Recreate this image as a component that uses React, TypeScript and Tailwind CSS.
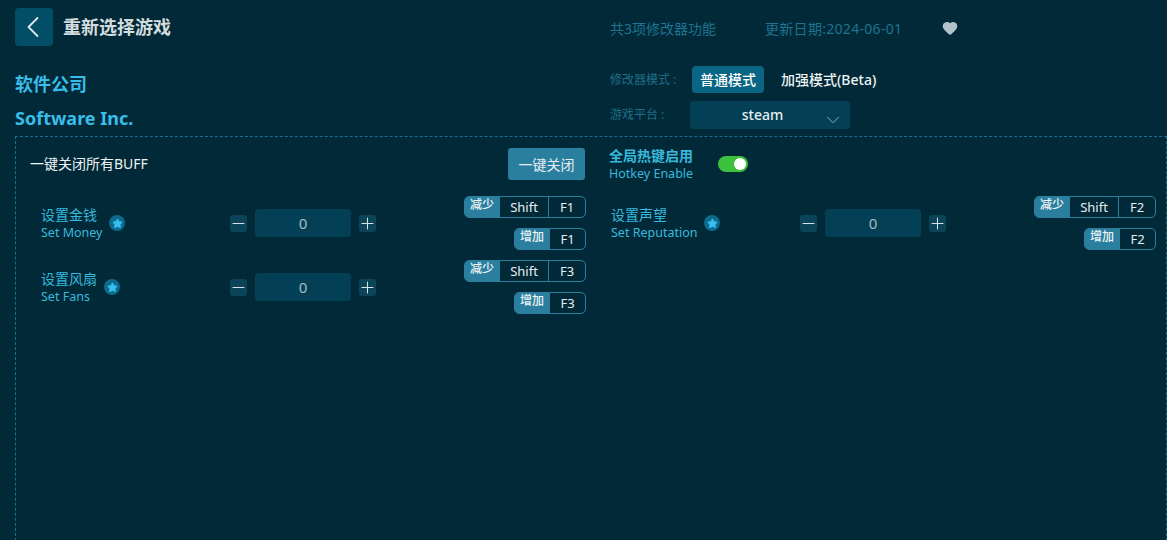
import { Star, ChevronLeft, ChevronDown, Heart, Minus, Plus } from 'lucide-react'

const font = { cjk: 'font-["Noto_Sans","Noto_Sans_CJK_SC",sans-serif]' }

interface Feature {
  name: string
  en: string
  fn: string
}

function KeyRow({ label, keys }: { label: string; keys: string[] }) {
  return (
    <div className="flex h-[22px] rounded-[5px] border border-[#2a7f9f] overflow-hidden text-[13px] leading-none text-[#e6eef1]">
      <div className="w-[36px] -ml-px bg-[#2a7f9f] flex justify-center pt-[2px] text-[12px] font-medium text-[#eef5f7]">{label}</div>
      {keys.map((k, i) => (
        <div
          key={k}
          className={`flex items-center justify-center ${k === 'Shift' ? 'w-[49px]' : keys.length > 1 ? 'w-[36px]' : 'w-[35px]'} ${i < keys.length - 1 ? 'border-r border-[#2a7f9f]' : ''}`}
        >
          {k}
        </div>
      ))}
    </div>
  )
}

function FeatureRow({ name, en, fn }: Feature) {
  return (
    <div className="w-[570px] h-[64px] pl-[25px] flex items-center">
      <div className="w-[189px] flex items-center">
        <div className="text-[#38b9dd]">
          <div className="text-[14px] leading-[18px]">{name}</div>
          <div className="text-[12.5px] leading-[17px]">{en}</div>
        </div>
        <div className="w-4 h-4 ml-[7px] rounded-full bg-[#0d6a8c] flex items-center justify-center">
          <Star size={11} className="text-[#38bdf0] fill-[#38bdf0]" />
        </div>
      </div>
      <div className="flex items-center">
        <button className="w-[17px] h-[17px] rounded-[3px] bg-[#0b4458] flex items-center justify-center text-[#d5e2e7]">
          <Minus size={19} strokeWidth={1.3} className="shrink-0" />
        </button>
        <div className="w-[96px] h-[28px] mx-2 rounded-[4px] bg-[#033f55] flex items-center justify-center text-[15px] text-[#a9bcc4]">0</div>
        <button className="w-[17px] h-[17px] rounded-[3px] bg-[#0b4458] flex items-center justify-center text-[#d5e2e7]">
          <Plus size={19} strokeWidth={1.3} className="shrink-0" />
        </button>
      </div>
      <div className="ml-auto w-[122px] flex flex-col items-end gap-[10px]">
        <KeyRow label="减少" keys={['Shift', fn]} />
        <KeyRow label="增加" keys={[fn]} />
      </div>
    </div>
  )
}

export default function App() {
  return (
    <div className={`w-[1167px] h-[540px] overflow-hidden bg-[#012937] pl-[15px] ${font.cjk}`}>
      <div className="h-[136px] flex">
        <div className="w-[595px] pt-[8px]">
          <div className="flex items-center">
            <button className="w-[38px] h-[38px] rounded-[4px] bg-[#034e67] flex items-center justify-center text-[#dfe8eb]">
              <ChevronLeft size={36} strokeWidth={1.2} className="shrink-0 -ml-[2px]" />
            </button>
            <div className="ml-[10px] text-[18px] font-bold text-[#d3dcdf]">重新选择游戏</div>
          </div>
          <div className="mt-[24px] text-[18px] leading-[28px] font-bold text-[#38bdea]">软件公司</div>
          <div className="mt-[6px] text-[18px] leading-[28px] font-bold text-[#38bdea]">Software Inc.</div>
        </div>
        <div className="flex-1">
          <div className="h-[56px] flex items-center text-[14px] text-[#1f7391]">
            <span className="w-[155px]">共3项修改器功能</span>
            <span className="w-[177px] tracking-[0.3px]">更新日期:2024-06-01</span>
            <Heart size={16} className="text-[#b4c3c9] fill-[#b4c3c9]" />
          </div>
          <div className="mt-[10px] h-[27px] flex items-center">
            <span className="w-[82px] text-[12px] text-[#1f6e8a]">修改器模式 :</span>
            <div className="w-[72px] h-[27px] rounded-[4px] bg-[#0a6584] flex items-center justify-center text-[14px] font-medium text-white">普通模式</div>
            <div className="ml-[17px] text-[14px] font-medium text-[#eef3f5]">加强模式(Beta)</div>
          </div>
          <div className="mt-[8px] h-[28px] flex items-center">
            <span className="w-[80px] text-[12px] text-[#1f6e8a]">游戏平台 :</span>
            <div className="relative w-[160px] h-[28px] rounded-[4px] bg-[#033f55] flex items-center justify-center pr-[15px] pb-[2px] text-[14px] font-medium text-[#e6eef1]">
              steam
              <ChevronDown size={22} strokeWidth={1} className="absolute right-[6px] top-[8px] text-[#9fb4bc]" />
            </div>
          </div>
        </div>
      </div>
      <div className="h-[420px] border-l border-t border-r border-dashed border-[#17708f]">
        <div className="flex h-[54px]">
          <div className="w-[569px] flex items-start pl-[14px] pt-[11px]">
            <div className="text-[14px] leading-[32px] text-[#eef3f5] flex-1">一键关闭所有BUFF</div>
            <button className="w-[77px] h-[32px] rounded-[3px] bg-[#2a7f9f] text-[14px] text-[#e6eef1]">一键关闭</button>
          </div>
          <div className="ml-[24px] pt-[10px] flex items-start">
            <div className="w-[84px] whitespace-nowrap text-[#38b9dd]">
              <div className="text-[14px] leading-[18px] font-bold">全局热键启用</div>
              <div className="text-[12.5px] leading-[17px]">Hotkey Enable</div>
            </div>
            <div className="ml-[25px] mt-[9px] w-[30px] h-4 rounded-full bg-[#3cc13c] flex items-center justify-end pr-[2px]">
              <div className="w-3 h-3 rounded-full bg-white" />
            </div>
          </div>
        </div>
        <div className="flex">
          <div>
            <FeatureRow name="设置金钱" en="Set Money" fn="F1" />
            <FeatureRow name="设置风扇" en="Set Fans" fn="F3" />
          </div>
          <FeatureRow name="设置声望" en="Set Reputation" fn="F2" />
        </div>
      </div>
    </div>
  )
}
